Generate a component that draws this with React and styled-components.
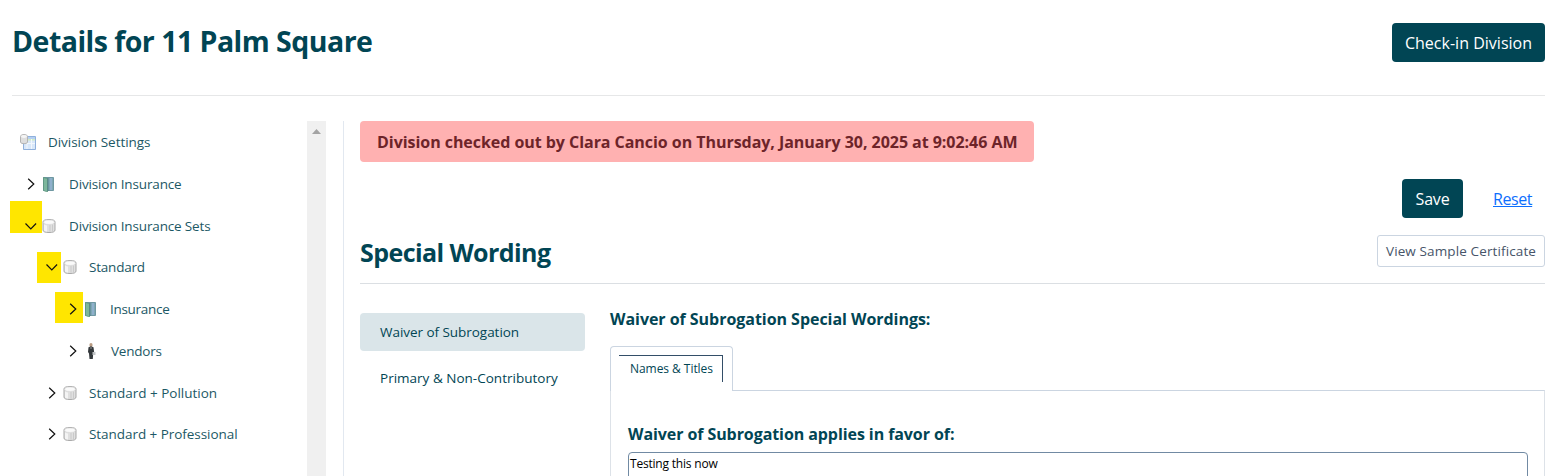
import React from 'react';
import styled, { createGlobalStyle } from 'styled-components';

const GlobalStyle = createGlobalStyle`
  * {
    box-sizing: border-box;
  }
  body {
    margin: 0;
    background: #fff;
    color: #014554;
    font-family: "Open Sans", "Noto Sans", sans-serif;
    overflow: hidden;
  }
  h1, h2, h3, h4 {
    margin: 0;
  }
`

const Page = styled.div`
  height: 476px;
  padding: 0 15px 0 12px;
  overflow: hidden;
`

const Header = styled.header`
  display: flex;
  justify-content: space-between;
  align-items: flex-start;
  height: 96px;
  padding-top: 23px;
  border-bottom: 1px solid #e6e7e8;
`

const Title = styled.h1`
  font-size: 28.5px;
  line-height: 37px;
  font-weight: 700;
  letter-spacing: -0.53px;
  white-space: nowrap;
`

const PrimaryButton = styled.button`
  width: ${props => props.width}px;
  height: 39px;
  padding: 1px 0 0;
  border: 0;
  border-radius: 4px;
  background: #014554;
  color: #fff;
  font: 400 16px/24px "Open Sans", sans-serif;
  letter-spacing: ${props => props.spacing}px;
  white-space: nowrap;
`

const Body = styled.div`
  display: flex;
  height: 355px;
  margin-top: 25px;
`

const Sidebar = styled.nav`
  display: flex;
  width: 314px;
`

const Tree = styled.ul`
  flex: 1;
  margin: 0;
  padding: 0.55px 0 0;
  list-style: none;
`

const TreeRow = styled.li`
  position: relative;
  display: flex;
  align-items: center;
  height: 41.7px;
  padding-left: ${props => props.indent}px;
  color: #1c5865;
  font-size: 13.5px;
  letter-spacing: ${props => props.spacing || -0.15}px;
  white-space: nowrap;

  svg {
    position: relative;
    flex: none;
  }
`

const TreeLabel = styled.span`
  margin-left: ${props => props.gap || 12}px;
`

const IconGap = styled.span`
  width: 2px;
`

// marker patch painted underneath the chevron
const Highlight = styled.span`
  position: absolute;
  left: ${props => props.x}px;
  top: ${props => props.y}px;
  width: ${props => props.w}px;
  height: ${props => props.h}px;
  background: #ffe600;
`

const ScrollTrack = styled.div`
  display: flex;
  justify-content: center;
  width: 19px;
  background: #f0f0f0;
`

const Main = styled.main`
  flex: 1;
  margin-left: 17px;
  padding-left: 16px;
  border-left: 1px solid #e2e8f0;
`

const Alert = styled.div`
  width: 674px;
  height: 41px;
  padding-left: 17px;
  border-radius: 4px;
  background: #ffb1b1;
  color: #6d2429;
  font-size: 16px;
  font-weight: 700;
  line-height: 42px;
  letter-spacing: -0.045px;
  white-space: nowrap;
`

const Actions = styled.div`
  display: flex;
  justify-content: flex-end;
  align-items: center;
  height: 39px;
  margin-top: 17px;
  padding-right: 13px;
`

const ResetLink = styled.a`
  width: 39px;
  margin-left: 30px;
  color: #0d6efd;
  font-size: 16px;
  letter-spacing: -0.4px;
  text-decoration: underline;
`

const SectionHead = styled.div`
  display: flex;
  justify-content: space-between;
  height: 66px;
  padding-top: 17px;
  border-bottom: 1px solid #dbdfe3;

  h2 {
    font-size: 25px;
    line-height: 35px;
    letter-spacing: -0.57px;
    white-space: nowrap;
  }
`

const OutlineButton = styled.button`
  width: 168px;
  height: 32px;
  padding: 0;
  border: 1px solid #cbd5e1;
  border-radius: 3px;
  background: #fff;
  color: #475569;
  font: 400 13.5px/20px "Open Sans", sans-serif;
  letter-spacing: 0.12px;
  white-space: nowrap;
`

const Section = styled.div`
  display: flex;
`

const Pills = styled.div`
  width: 225px;
  margin-top: 29px;
`

const Pill = styled.div`
  height: 38px;
  margin-bottom: 8px;
  padding-left: 20px;
  border-radius: 4px;
  background: ${props => props.active ? '#dae5e9' : 'transparent'};
  font-size: 13.5px;
  line-height: 38px;
  letter-spacing: ${props => props.spacing}px;
  white-space: nowrap;
`

const Wordings = styled.div`
  flex: 1;
  margin-left: 25px;
  padding-top: 22px;
`

const Heading = styled.h3`
  font-size: 16px;
  line-height: 26px;
  letter-spacing: ${props => props.spacing}px;
  white-space: nowrap;
`

const Tab = styled.div`
  position: relative;
  z-index: 1;
  width: 123px;
  height: 45px;
  margin-top: 14px;
  padding: 8px 9px 0 8px;
  border: 1px solid #cbd5e1;
  border-bottom: 0;
  border-radius: 4px 4px 0 0;
  background: #fff;
`

const TabLabel = styled.div`
  height: 27px;
  padding-left: 11px;
  border-top: 1px solid #334e68;
  border-right: 1px solid #334e68;
  font-size: 12px;
  line-height: 26px;
  letter-spacing: -0.05px;
  white-space: nowrap;
`

const Panel = styled.div`
  height: 100px;
  margin-top: -1px;
  padding: 30px 16px 0 17px;
  border: 1px solid #cbd5e1;
  border-color: #cbd5e1 #dde2e8;
`

const TextBox = styled.div`
  height: 60px;
  margin-top: 5px;
  padding-left: 1px;
  border: 1px solid #718aa3;
  border-radius: 4px;
  color: #000;
  font-size: 12px;
  line-height: 22px;
  letter-spacing: -0.2px;
`

const Chevron = ({ open }) => (
  <svg width="16" height="16" viewBox="0 0 16 16" fill="none" stroke="#111" strokeWidth="1.2">
    <path d={open ? 'M2.5 5.5l5.3 5.3 5.3-5.3' : 'M5.2 2.7L10.8 8l-5.6 5.3'} />
  </svg>
)

const SettingsIcon = () => (
  <svg width="16" height="16" viewBox="0 0 16 16">
    <path d="M3.5 2.5h12v13h-12z" fill="#d8e7f9" stroke="#8fb0dc" />
    <path d="M8 3h7v2H8z" fill="#b5d0f2" />
    <path d="M8 5h7v1.5H8z" fill="#d3ecc0" />
    <path d="M4 9.5h11M11.5 5v10M7 9v6" stroke="#f2f7fd" />
    <path d="M.5 2.5Q.5.5 4 .5t3.500 2V8q0 1.700-3.500 1.700T.5 8z" fill="#dedede" stroke="#b4b4b4" />
    <ellipse cx="4" cy="2.5" rx="3" ry="1.4" fill="#f5f5f5" />
  </svg>
)

const BookIcon = () => (
  <svg width="16" height="16" viewBox="0 0 16 16">
    <path d="M2.5 1.5h10v13h-10z" fill="#7fa8b4" stroke="#6f98a2" />
    <path d="M2.5 1.5l4 1V16l-4-1.500z" fill="#7db79c" stroke="#579079" strokeWidth=".7" />
    <path d="M9 2h2v12H9z" fill="#8fb0cc" />
    <path d="M7 2v13" stroke="#4b7784" strokeWidth=".8" />
  </svg>
)

const DatabaseIcon = () => (
  <svg width="16" height="16" viewBox="0 0 16 16">
    <path d="M2 4Q2 1.5 8 1.5T14 4v8q0 2.500-6 2.500T2 12z" fill="#e0e0e0" stroke="#a9a9a9" />
    <path d="M3 6.5q2 1 3 1V13.500q-2 0-3-1z" fill="#f4f4f4" />
    <path d="M9 7v6.500M11.500 6.500V13" stroke="#cacaca" />
    <ellipse cx="8" cy="4.2" rx="5.3" ry="2.2" fill="#fafafa" stroke="#d0d0d0" strokeWidth=".5" />
  </svg>
)

const VendorIcon = () => (
  <svg width="16" height="16" viewBox="0 0 16 16">
    <ellipse cx="8" cy="2" rx="1.6" ry="2" fill="#b99b82" />
    <path d="M5.5 4.2L8 3.3l2.500.9.7 5.300-1 1-.4 5.500H6.500L6 10.500 5 9z" fill="#33383b" />
    <path d="M8 4v2" stroke="#aaa" strokeWidth=".8" />
    <path d="M9.5 9h3v3h-3z" fill="#c2c5c7" />
  </svg>
)

const icons = {
  settings: SettingsIcon,
  book: BookIcon,
  database: DatabaseIcon,
  vendor: VendorIcon,
}

const rows = [
  { label: 'Division Settings', icon: 'settings', indent: 8, spacing: -0.04 },
  { label: 'Division Insurance', icon: 'book', indent: 11, chevron: true },
  { label: 'Division Insurance Sets', icon: 'database', indent: 11, chevron: true, open: true, mark: { x: -2, y: -4, w: 32, h: 32 } },
  { label: 'Standard', icon: 'database', indent: 31.5, gap: 11.5, chevron: true, open: true, spacing: -0.2, mark: { x: 25, y: 5, w: 24, h: 31 } },
  { label: 'Insurance', icon: 'book', indent: 52.5, gap: 11.5, chevron: true, spacing: -0.3, mark: { x: 43, y: 4, w: 28, h: 31 } },
  { label: 'Vendors', icon: 'vendor', indent: 52.5, gap: 12.5, chevron: true, spacing: -0.2 },
  { label: 'Standard + Pollution', icon: 'database', indent: 31.5, gap: 11.5, chevron: true, spacing: -0.01 },
  { label: 'Standard + Professional', icon: 'database', indent: 31.5, gap: 11.5, chevron: true, spacing: -0.05 },
]

const TreeItem = ({ row }) => {
  const Icon = icons[row.icon];
  return (
    <TreeRow indent={row.indent} spacing={row.spacing}>
      {row.mark && <Highlight {...row.mark} />}
      {row.chevron && <Chevron open={row.open} />}
      {row.chevron && <IconGap />}
      <Icon />
      <TreeLabel gap={row.gap}>{row.label}</TreeLabel>
    </TreeRow>
  );
}

const App = () => (
  <Page>
    <GlobalStyle />
    <Header>
      <Title>Details for 11 Palm Square</Title>
      <PrimaryButton width={153} spacing={0.02}>Check-in Division</PrimaryButton>
    </Header>
    <Body>
      <Sidebar>
        <Tree>
          {rows.map(row => <TreeItem key={row.label} row={row} />)}
        </Tree>
        <ScrollTrack>
          <svg width="9" height="18" viewBox="0 0 9 18">
            <path d="M0 13L4.5 8 9 13z" fill="#a3a3a3" />
          </svg>
        </ScrollTrack>
      </Sidebar>
      <Main>
        <Alert>Division checked out by Clara Cancio on Thursday, January 30, 2025 at 9:02:46 AM</Alert>
        <Actions>
          <PrimaryButton width={61} spacing={-0.2}>Save</PrimaryButton>
          <ResetLink>Reset</ResetLink>
        </Actions>
        <SectionHead>
          <h2>Special Wording</h2>
          <OutlineButton>View Sample Certificate</OutlineButton>
        </SectionHead>
        <Section>
          <Pills>
            <Pill active spacing={-0.04}>Waiver of Subrogation</Pill>
            <Pill spacing={0.01}>Primary &amp; Non-Contributory</Pill>
          </Pills>
          <Wordings>
            <Heading spacing={-0.04}>Waiver of Subrogation Special Wordings:</Heading>
            <Tab>
              <TabLabel>Names &amp; Titles</TabLabel>
            </Tab>
            <Panel>
              <Heading spacing={-0.08}>Waiver of Subrogation applies in favor of:</Heading>
              <TextBox>Testing this now</TextBox>
            </Panel>
          </Wordings>
        </Section>
      </Main>
    </Body>
  </Page>
)

export default App;
